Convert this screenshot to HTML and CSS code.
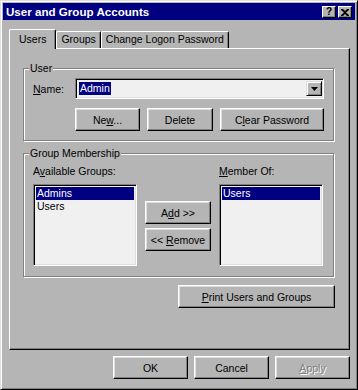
FILE: index.html
```html
<!doctype html>
<html lang="en">
<head>
	<meta charset="UTF-8">
	<title>User and Group Accounts</title>
	<link rel="stylesheet" href="styles.css">
</head>
<body>
	<div class="window">
		<div class="titlebar">
			<span class="title">User and Group Accounts</span>
			<div class="caption-buttons">
				<span class="cap-btn help">?</span>
				<span class="cap-btn close">
					<svg width="8" height="7" viewBox="0 0 8 7"><path d="M0 0h2l2 2 2-2h2v1L5 3.5 8 6v1H6L4 5 2 7H0V6l3-2.5L0 1z" fill="#000"/></svg>
				</span>
			</div>
		</div>
		<div class="content">
			<div class="tabs">
				<div class="tab active">Users</div>
				<div class="tab">Groups</div>
				<div class="tab">Change Logon Password</div>
			</div>
			<div class="panel">
				<fieldset class="group user-group">
					<legend>User</legend>
					<div class="name-row">
						<label class="name-label"><u>N</u>ame:</label>
						<div class="combo">
							<span class="combo-text"><span class="selected-text">Admin</span></span>
							<span class="combo-arrow">
								<svg width="7" height="4" viewBox="0 0 7 4"><path d="M0 0h7L3.5 4z" fill="#000"/></svg>
							</span>
						</div>
					</div>
					<div class="btn-row">
						<button class="btn btn-new">Ne<u>w</u>...</button>
						<button class="btn btn-delete">Delete</button>
						<button class="btn btn-clear">C<u>l</u>ear Password</button>
					</div>
				</fieldset>
				<fieldset class="group member-group">
					<legend>Group Membership</legend>
					<div class="member-grid">
						<label class="list-label">A<u>v</u>ailable Groups:</label>
						<span></span>
						<label class="list-label"><u>M</u>ember Of:</label>
						<div class="listbox">
							<div class="list-item selected">Admins</div>
							<div class="list-item">Users</div>
						</div>
						<div class="move-buttons">
							<button class="btn">A<u>d</u>d &gt;&gt;</button>
							<button class="btn">&lt;&lt; <u>R</u>emove</button>
						</div>
						<div class="listbox">
							<div class="list-item selected">Users</div>
						</div>
					</div>
				</fieldset>
				<div class="print-row">
					<button class="btn btn-print"><u>P</u>rint Users and Groups</button>
				</div>
			</div>
			<div class="dialog-buttons">
				<button class="btn btn-dialog">OK</button>
				<button class="btn btn-dialog">Cancel</button>
				<button class="btn btn-dialog disabled"><u>A</u>pply</button>
			</div>
		</div>
	</div>
</body>
</html>
```

FILE: styles.css
```css
* {
	box-sizing: border-box;
}
body {
	margin: 0;
	font-family: "Liberation Sans", Arial, sans-serif;
	font-size: 10.5px;
	color: #000;
	background: #b5b5b5;
}
.window {
	width: 358px;
	height: 390px;
	padding: 2px;
	background: #b5b5b5;
	border: 1px solid;
	border-color: #dfdfdf #000 #000 #dfdfdf;
	box-shadow: inset 1px 1px #fff, inset -1px -1px #808080;
}
.titlebar {
	display: flex;
	align-items: center;
	height: 17px;
	padding: 0 3px 0 3px;
	background: #000080;
}
.title {
	flex: 1;
	color: #fff;
	font-weight: bold;
	font-size: 11.6px;
}
.caption-buttons {
	display: flex;
	gap: 2px;
	margin-top: 1px;
}
.cap-btn {
	display: flex;
	align-items: center;
	justify-content: center;
	width: 14px;
	height: 12px;
	background: #b5b5b5;
	border: 1px solid;
	border-color: #fff #000 #000 #fff;
	box-shadow: inset -1px -1px #808080;
	font-weight: bold;
	font-size: 10px;
	line-height: 10px;
}
.content {
	padding: 0 5px 0 6px;
}
.tabs {
	display: flex;
	align-items: flex-end;
	margin-top: 9px;
	padding-left: 1px;
}
.tab {
	position: relative;
	height: 17px;
	padding: 0 4px;
	line-height: 15px;
	border: 1px solid;
	border-bottom: none;
	border-color: #fff #000 #000 #fff;
	border-radius: 2px 2px 0 0;
	box-shadow: inset -1px 0 #808080;
	background: #b5b5b5;
}
.tab.active {
	z-index: 1;
	height: 20px;
	margin-bottom: -1px;
	margin-left: -1px;
	padding: 0 9px;
	line-height: 18px;
}
.panel {
	height: 302px;
	padding: 13px 15px 0 13px;
	border: 1px solid;
	border-color: #fff #000 #000 #fff;
	box-shadow: inset -1px -1px #808080;
}
.group {
	margin: 0;
	border: 1px solid #808080;
	box-shadow: inset 1px 1px #fff, 1px 1px #fff;
}
.group legend {
	margin-left: -4px;
	padding: 0 1px;
	line-height: 13px;
	background: #b5b5b5;
}
.user-group {
	padding: 3px 9px 9px 9px;
}
.name-row {
	display: flex;
	align-items: center;
}
.name-label {
	width: 42px;
}
.combo,
.listbox {
	border: 1px solid;
	border-color: #808080 #fff #fff #808080;
	box-shadow: inset 1px 1px #000, inset -1px -1px #dfdfdf;
	background: #f0f0f0;
}
.combo {
	display: flex;
	flex: 1;
	height: 21px;
	padding: 2px 1px 2px 2px;
}
.combo-text {
	flex: 1;
	display: flex;
	align-items: center;
	padding-left: 1px;
}
.selected-text {
	padding: 0 1px;
	line-height: 13px;
	background: #000080;
	color: #fff;
}
.combo-arrow {
	display: flex;
	align-items: center;
	justify-content: center;
	width: 16px;
	background: #b5b5b5;
	border: 1px solid;
	border-color: #dfdfdf #000 #000 #dfdfdf;
	box-shadow: inset 1px 1px #fff, inset -1px -1px #808080;
}
.btn-row {
	display: flex;
	justify-content: flex-end;
	gap: 7px;
	margin-top: 9px;
}
.btn {
	height: 23px;
	padding: 0;
	font: inherit;
	color: #000;
	background: #b5b5b5;
	border: 1px solid;
	border-color: #fff #000 #000 #fff;
	box-shadow: inset -1px -1px #808080, inset 1px 1px #dfdfdf;
}
.btn-new {
	width: 65px;
}
.btn-delete {
	width: 66px;
}
.btn-clear {
	width: 104px;
}
.member-group {
	margin-top: 6px;
	padding: 5px 9px 10px 9px;
}
.member-grid {
	display: grid;
	grid-template-columns: 104px 66px 104px;
	column-gap: 8px;
	row-gap: 6px;
}
.list-label {
	line-height: 13px;
}
.listbox {
	height: 82px;
	padding: 2px;
}
.list-item {
	height: 13px;
	line-height: 13px;
	padding-left: 1px;
}
.list-item.selected {
	background: #000080;
	color: #fff;
}
.move-buttons {
	display: flex;
	flex-direction: column;
	gap: 4px;
	padding-top: 17px;
}
.print-row {
	display: flex;
	justify-content: flex-end;
	margin-top: 8px;
	margin-right: -1px;
}
.btn-print {
	width: 157px;
}
.dialog-buttons {
	display: flex;
	justify-content: flex-end;
	gap: 6px;
	margin-top: 6px;
}
.btn-dialog {
	width: 75px;
}
.btn-dialog.disabled {
	color: #808080;
	text-shadow: 1px 1px #fff;
}
```
